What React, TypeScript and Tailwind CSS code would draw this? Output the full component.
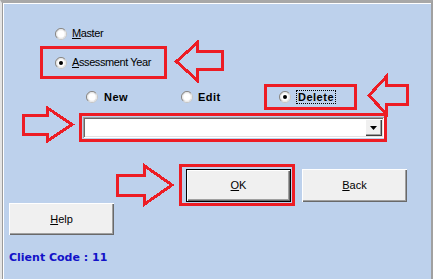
import React from 'react'

function Radio({ checked = false }: { checked?: boolean }) {
  return (
    <svg width="12" height="12" viewBox="0 0 12 12" className="shrink-0">
      <circle cx="6" cy="6" r="5.5" fill="#fff" stroke="#c4c4c4" />
      <path d="M2.1 9.9 A5.5 5.5 0 0 1 9.9 2.1" fill="none" stroke="#858585" />
      <circle cx="6" cy="6" r="4.3" fill="none" stroke="#e2e2e2" />
      {checked && <circle cx="6" cy="6" r="2" fill="#000" />}
    </svg>
  )
}

function Btn({ children, def = false, className = '' }: { children: React.ReactNode; def?: boolean; className?: string }) {
  return (
    <div className={`${className} ${def ? 'border border-black' : ''} flex`}>
      <div className="flex-1 flex items-center justify-center bg-[#f0f0f0] text-[11px] text-black shadow-[inset_1px_1px_#fff,inset_-1px_-1px_#696969,inset_-2px_-2px_#a0a0a0]">
        {children}
      </div>
    </div>
  )
}

function Arrows() {
  const a = {
    fill: 'none',
    stroke: '#ed1c24',
    strokeWidth: 3,
    strokeLinejoin: 'miter' as const,
    strokeMiterlimit: 10,
  }
  return (
    <svg className="absolute top-0 left-0 pointer-events-none" width="433" height="279" shapeRendering="crispEdges">
      <polygon {...a} points="176.5,61.5 197.5,42.5 197.5,51 222.5,51 222.5,69.5 197.5,69.5 197.5,80.5" />
      <polygon {...a} points="369,95.5 386.5,76.5 386.5,85.5 407,85.5 407,104.5 386.5,104.5 386.5,114" />
      <polygon {...a} points="23,115.5 47.5,115.5 47.5,108 72,124.5 47.5,141 47.5,134 23,134" />
      <polygon {...a} points="117.5,175 144,175 144,165.5 172,185 144,204.5 144,195 117.5,195" />
    </svg>
  )
}

export default function App() {
  return (
    <div className="relative w-[433px] h-[279px] overflow-hidden font-['Liberation_Sans',Arial,sans-serif]">
      <div className="w-full h-full border-t-[3px] border-t-[#a8a8a8] border-l-2 border-l-[#e4e4e4] border-r-2 border-r-[#a0a0a0]">
        <div className="h-full border-l border-[#9a9a9a]">
          <div className="h-full border-l border-t border-white bg-[#bdd1ec] flex flex-col items-start text-black">
            {/* Master */}
            <div className="mt-[23px] ml-[51px] h-[13px] flex items-center gap-[5px] text-[11px] tracking-[-0.4px]">
              <Radio />
              <span><span className="underline">M</span>aster</span>
            </div>

            {/* Assessment year */}
            <div className="mt-[6px] ml-[36px] w-[127px] h-[33px] border-[3px] border-[#ed1c24] flex items-center pl-[12px] gap-[5px] text-[11px] tracking-[-0.4px]">
              <Radio checked />
              <span><span className="underline">A</span>ssessment Year</span>
            </div>

            {/* New / Edit / Delete */}
            <div className="mt-[5px] ml-[82px] h-[26px] flex items-center text-[11px] font-bold tracking-[0.5px]">
              <div className="w-[95px] flex items-center gap-[6px]">
                <Radio />
                <span>New</span>
              </div>
              <div className="w-[83px] flex items-center gap-[5px]">
                <Radio />
                <span>Edit</span>
              </div>
              <div className="w-[93px] h-full border-[3px] border-[#ed1c24] flex items-center pl-[12px] gap-[5px]">
                <Radio checked />
                <span className="border border-dotted border-black px-[1px] leading-[12px]">Delete</span>
              </div>
            </div>

            {/* Combo */}
            <div className="mt-[3px] ml-[75px] w-[308px] h-[29px] border-[3px] border-[#ed1c24] pl-[1px] pt-[1px]">
              <div className="w-[301px] h-[21px] bg-white p-[2px] flex justify-end shadow-[inset_1px_1px_#a0a0a0,inset_-1px_-1px_#fff,inset_2px_2px_#696969,inset_-2px_-2px_#e3e3e3]">
                <div className="w-[17px] h-[17px] bg-[#f0f0f0] flex items-center justify-center shadow-[inset_1px_1px_#fff,inset_-1px_-1px_#404040,inset_-2px_-2px_#a0a0a0]">
                  <svg width="7" height="4" viewBox="0 0 7 4">
                    <polygon points="0,0 7,0 3.5,4" fill="#000" />
                  </svg>
                </div>
              </div>
            </div>

            {/* OK / Back */}
            <div className="mt-[22px] ml-[175px] flex items-start">
              <div className="w-[116px] h-[42px] border-[3px] border-[#ed1c24] pl-[4px] pt-[2px]">
                <Btn def className="w-[105px] h-[33px]">
                  <span><span className="underline">O</span>K</span>
                </Btn>
              </div>
              <Btn className="ml-[7px] mt-[5px] w-[105px] h-[33px]">
                <span><span className="underline">B</span>ack</span>
              </Btn>
            </div>

            {/* Help */}
            <Btn className="mt-[-3px] ml-[5px] w-[105px] h-[32px]">
              <span><span className="underline">H</span>elp</span>
            </Btn>

            <div className="mt-[16px] ml-[5px] font-['DejaVu_Sans',sans-serif] font-bold text-[11px] leading-[13px] text-[#1212c8]">
              Client Code : 11
            </div>
          </div>
        </div>
      </div>
      <Arrows />
    </div>
  )
}
